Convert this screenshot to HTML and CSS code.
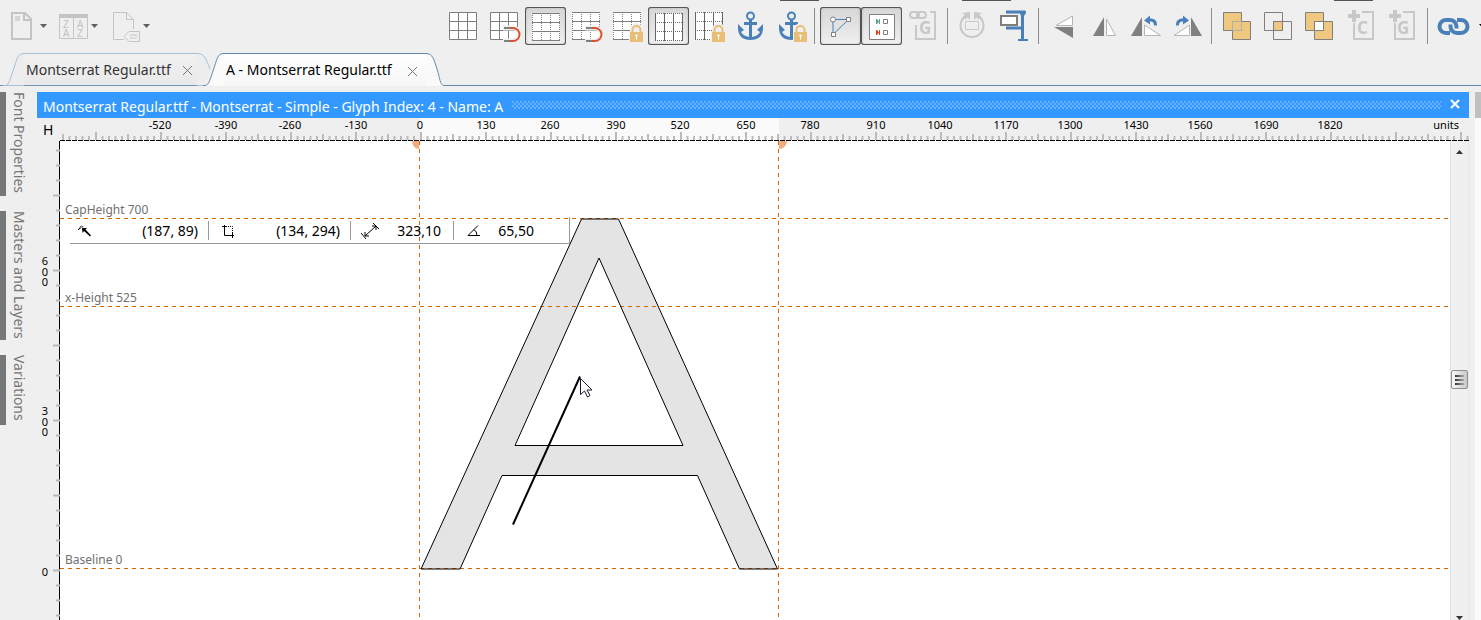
FILE: index.html
```html
<!DOCTYPE html>
<html lang="en">
<head>
<meta charset="utf-8">
<title>A - Montserrat Regular.ttf</title>
<link rel="stylesheet" href="styles.css">
</head>
<body>
<svg class="defs" aria-hidden="true">
  <defs>
    <g id="grid-solid"><path d="M6.5 5.5h27v27h-27z" fill="#fff" stroke="#7f7f7f"/><path d="M15.5 5.5v27M24.5 5.5v27M6.5 14.5h27M6.5 23.5h27" stroke="#7f7f7f"/></g>
    <g id="grid-rows"><path d="M6 5h28v28h-28z" fill="#fff"/><path d="M6 5.5h28M6 14.5h28M6 23.5h28M6 32.5h28" stroke="#7f7f7f"/><path d="M6.5 5v28M15.5 5v28M24.5 5v28M33.5 5v28" stroke="#7f7f7f" stroke-dasharray="1 1"/></g>
    <g id="grid-cols"><path d="M6 5h28v28h-28z" fill="#fff"/><path d="M6.5 5v28M15.5 5v28M24.5 5v28M33.5 5v28" stroke="#666"/><path d="M6 5.5h28M6 14.5h28M6 23.5h28M6 32.5h28" stroke="#666" stroke-dasharray="1 1"/></g>
    <g id="magnet" fill="none"><path d="M19 21h10a6.500 6.500 0 0 1 0 13h-10" stroke="#efefef" stroke-width="5"/><path d="M25 21h4a6.500 6.500 0 0 1 0 13h-4" stroke="#d9532f" stroke-width="2"/><path d="M20 21h6M20 34h6" stroke="#7f7f7f" stroke-width="2"/></g>
    <g id="lock"><path d="M25.500 25v-2.500a4 4 0 0 1 8 0V25" fill="#efefef" stroke="#efefef" stroke-width="5"/><path d="M22 24h15v12h-15z" fill="#efefef"/><path d="M25.500 26v-3a4 4 0 0 1 8 0v3" fill="none" stroke="#e9bf78" stroke-width="2"/><path d="M23 25h13v10h-13z" fill="#e9bf78"/><path d="M28 28.500q1.500-2 3 0l-1 1v3h-1v-3z" fill="#fff"/></g>
    <g id="anchor"><circle cx="20.500" cy="9" r="3.500" fill="none" stroke="#4a80b8" stroke-width="2"/><path d="M19 12h3v3h5v3h-5v12q6-1 8-5l-3-2 6-6v5q-1 11-12.500 11T8 22v-5l6 6-3 2q2 4 8 5V18h-5v-3h5z" fill="#4a80b8"/></g>
    <g id="add-frame" stroke="#c8c8c8" fill="none" stroke-width="2"><path d="M23 5h11v27H15V16"/><path d="M15 3v12M9 9h12" stroke-width="4"/></g>
    <pattern id="ticks-x" width="65" height="8" x="360" y="14" patternUnits="userSpaceOnUse">
      <path d="M1 0v8M33 2v6M7.500 4v4M14 4v4M20.500 4v4M27 4v4M39.500 4v4M46 4v4M52.500 4v4M59 4v4" stroke="#bbb" stroke-width="2"/>
    </pattern>
    <pattern id="ticks-y" width="7" height="75" y="53" patternUnits="userSpaceOnUse">
      <path d="M0 1.500h7M3 16.500h4M3 31.500h4M3 46.500h4M3 61.500h4" stroke="#bbb" stroke-width="2"/>
    </pattern>
  </defs>
</svg>

<div class="upper-row" aria-hidden="true"><i class="edge edge-a"></i><i class="edge edge-b"></i><i class="edge edge-c"></i></div>
<header class="toolbar">
  <div class="group files">
    <button class="tool menu" aria-label="New font"><svg width="27" height="38"><path d="M1 6h13l6 6v20H1z" fill="none" stroke="#c4c4c4" stroke-width="2"/><path d="M13 6v7h7" fill="none" stroke="#c4c4c4" stroke-width="2"/><path d="M4 9h5v5H4z" fill="#d4d4d4"/></svg><span class="caret"></span></button>
    <button class="tool menu" aria-label="Sort glyphs"><svg width="30" height="38"><path d="M.500 9.500h28v22h-28zM14.500 9v23" fill="none" stroke="#c4c4c4"/><path d="M0 7h29v4H0z" fill="#c4c4c4"/><g class="sort-letters"><text x="4" y="21">Z</text><text x="18" y="21">A</text><text x="4" y="30">A</text><text x="18" y="30">Z</text></g></svg><span class="caret"></span></button>
    <button class="tool menu" aria-label="Tag font"><svg width="31" height="38"><path transform="translate(3 0)" d="M11 32.500H.500v-27h13l7 7V22M13.500 5.500v7h7M11 29.500l5-5h10.500v10H16zM17 28h7M17 31h7" fill="none" stroke="#c4c4c4"/></svg><span class="caret"></span></button>
  </div>
  <div class="group tools">
    <button class="tool" aria-label="Grid"><svg width="41" height="38"><use href="#grid-solid"/></svg></button>
    <button class="tool" aria-label="Snap to grid"><svg width="41" height="38"><use href="#grid-solid"/><use href="#magnet"/></svg></button>
    <button class="tool pressed" aria-label="Guidelines" aria-pressed="true"><svg width="41" height="38"><use href="#grid-rows" x="1" y="1"/></svg></button>
    <button class="tool" aria-label="Snap to guidelines"><svg width="41" height="38"><use href="#grid-rows"/><use href="#magnet"/></svg></button>
    <button class="tool" aria-label="Lock guidelines"><svg width="41" height="38"><use href="#grid-rows"/><use href="#lock"/></svg></button>
    <button class="tool pressed" aria-label="Metrics" aria-pressed="true"><svg width="41" height="38"><use href="#grid-cols" x="1" y="1"/></svg></button>
    <button class="tool" aria-label="Lock metrics"><svg width="41" height="38"><use href="#grid-cols"/><use href="#lock"/></svg></button>
    <button class="tool" aria-label="Anchors"><svg width="41" height="38"><use href="#anchor"/></svg></button>
    <button class="tool" aria-label="Lock anchors"><svg width="41" height="38"><use href="#anchor"/><use href="#lock"/></svg></button>
    <span class="sep narrow"></span>
    <button class="tool pressed" aria-label="Points" aria-pressed="true"><svg width="41" height="38" fill="none"><path d="M13 12.500h15.500L13 27.500z" fill="#e2e2e2" stroke="#4a80b8" stroke-width="1"/><g fill="#fff" stroke="#7f7f7f" stroke-width="1"><circle cx="13" cy="12.500" r="2.500"/><path d="M26.500 10.500h4v4h-4zM11.500 25.500h4v4h-4z"/></g></svg></button>
    <button class="tool pressed" aria-label="Point data" aria-pressed="true"><svg width="41" height="38" fill="none"><path d="M8.500 7.500h25v25h-25z" fill="#fff" stroke="#7f7f7f"/><path d="M15.500 12v5M18.500 12v5" stroke="#5fa08c"/><path d="M16 12l2 2.500-2 2.500z" fill="#5fa08c"/><path d="M15.500 23v5M18.500 23v5" stroke="#d9431f"/><path d="M16 23l2 2.500-2 2.500z" fill="#d9431f"/><path d="M22.500 12.500h4v4h-4zM22.500 23.500h4v4h-4z" stroke="#7f7f7f"/></svg></button>
    <button class="tool" aria-label="Composite link"><svg width="41" height="38" fill="none" stroke="#c8c8c8" stroke-width="2"><path d="M28 5h5v27H14V18"/><rect x="8" y="5" width="9" height="6" rx="3"/><rect x="15" y="5" width="9" height="6" rx="3"/><text class="letter" x="17" y="27">G</text></svg></button>
    <span class="sep"></span>
    <button class="tool" aria-label="Rotate"><svg width="41" height="38" fill="none" stroke="#c8c8c8"><path d="M25.500 8.500a11.500 11.500 0 1 1-11 0" stroke-width="2"/><path d="M13.500 14.500h13v8h-13z"/><path d="M10 6l8-1v8l-2.500-2.500-2 2-2.500-2.500 2-2zM30 6l-8-1v8l2.500-2.500 2 2 2.500-2.500-2-2z" fill="#c8c8c8" stroke="none"/></svg></button>
    <button class="tool" aria-label="Measure"><svg width="41" height="38" fill="none"><path d="M13 5h19M13 21h15" stroke="#4a80b8" stroke-width="3"/><path d="M26 4h7v2l-2 3v23h4v2H25v-2h3V9z" fill="#4a80b8"/><path d="M8 9h16v9H8z" fill="#fff" stroke="#7f7f78" stroke-width="2"/></svg></button>
    <span class="sep"></span>
    <button class="tool" aria-label="Flip vertical"><svg width="41" height="38"><path d="M13 18.500L29.500 9v9.500z" fill="#fff" stroke="#b5b5b5"/><path d="M11 20h19v11z" fill="#808080"/></svg></button>
    <button class="tool" aria-label="Flip horizontal"><svg width="41" height="38"><path d="M9 29L20 10v19z" fill="#808080"/><path d="M22.500 12l9 16.500h-9z" fill="#fff" stroke="#b5b5b5"/></svg></button>
    <button class="tool" aria-label="Rotate left"><svg width="41" height="38"><path d="M6 29L17 10v19z" fill="#808080"/><path d="M19.500 18l16 10.500h-16z" fill="#fff" stroke="#b5b5b5"/><path d="M19 13.500l6-5v3c5 0 7 2 7 7h-3c0-3-1-4-4-4v3z" fill="#4a80b8"/></svg></button>
    <button class="tool" aria-label="Rotate right"><svg width="41" height="38"><path d="M25 10l11 19H25z" fill="#808080"/><path d="M23.500 18v10.500H8z" fill="#fff" stroke="#b5b5b5"/><path d="M23 13.500l-6-5v3c-5 0-7 2-7 7h3c0-3 1-4 4-4v3z" fill="#4a80b8"/></svg></button>
    <span class="sep"></span>
    <button class="tool" aria-label="Union"><svg width="41" height="38" stroke="#7f7f7f" fill="#eec87f"><path d="M7.500 5.500h18v18h-18zM16.500 14.500h18v18h-18z"/><path d="M16.500 14.500h9v9h-9z" stroke="#b5b0a4"/></svg></button>
    <button class="tool" aria-label="Intersection"><svg width="41" height="38" stroke="#7f7f7f" fill="none"><path d="M16.500 14.500h9v9h-9z" fill="#eec87f"/><path d="M7.500 5.500h18v18h-18zM16.500 14.500h18v18h-18z"/></svg></button>
    <button class="tool" aria-label="Exclusion"><svg width="41" height="38" stroke="#7f7f7f" fill="#eec87f"><path d="M7.500 5.500h18v18h-18zM16.500 14.500h18v18h-18z"/><path d="M16.500 14.500h9v9h-9z" fill="#fff"/></svg></button>
    <button class="tool" aria-label="Add contour"><svg width="41" height="38"><use href="#add-frame"/><text class="letter" x="18" y="27">C</text></svg></button>
    <button class="tool" aria-label="Add glyph"><svg width="41" height="38"><use href="#add-frame"/><text class="letter" x="17" y="27">G</text></svg></button>
    <span class="sep wide"></span>
    <button class="tool" aria-label="Link"><svg width="41" height="38" fill="none" stroke="#4a80b8" stroke-width="4"><path d="M16 26h-4a6.500 6.500 0 0 1 0-13h4a6.500 6.500 0 0 1 6.500 6.500v2"/><path d="M23 13h4a6.500 6.500 0 0 1 0 13h-4a6.500 6.500 0 0 1-6.500-6.500v-2"/></svg></button>
    <span class="caret dark"></span>
  </div>
</header>

<nav class="tabs">
  <div class="tab first">
    <svg class="tab-side" width="21" height="33"><path d="M0 32.500C6 33 6 28 10 18S14 .500 21 .500V32.500z" class="fill-off"/><path d="M0 32.500C6 33 6 29 10 18S14 .500 21 .500" class="line-off"/></svg>
    <div class="tab-body"><a href="#font">Montserrat Regular.ttf</a><button class="close" aria-label="Close font"><svg width="9" height="9"><path d="M0 0l9 9M9 0L0 9"/></svg></button></div>
    <svg class="tab-side" width="16" height="33"><path d="M0 .500C9 0 11 11 13 16L6 32.500H0z" class="fill-off"/><path d="M0 .500C8 .500 9 6 13 16" class="line-off"/></svg>
  </div>
  <div class="tab active">
    <svg class="tab-side" width="21" height="33"><path d="M0 32.500C6 33 6 29 10 18S14 .500 21 .500V33H0z" class="fill-on"/><path d="M0 32.500C6 33 6 29 10 18S14 .500 21 .500" class="line-on"/></svg>
    <div class="tab-body"><a href="#glyph">A - Montserrat Regular.ttf</a><button class="close" aria-label="Close glyph"><svg width="9" height="9"><path d="M0 0l9 9M9 0L0 9"/></svg></button></div>
    <svg class="tab-side" width="18" height="33"><path d="M0 .500C8 .500 8 6 12 18S16 32 18 32.500V33H0z" class="fill-on"/><path d="M0 .500C7 .500 8 7 11 16S14 32.500 18 32.500" class="line-on"/></svg>
  </div>
  <div class="tab-rest"></div>
</nav>

<main class="workspace">
  <aside class="rail">
    <button class="rail-tab font">Font Properties</button>
    <button class="rail-tab masters">Masters and Layers</button>
    <button class="rail-tab variations">Variations</button>
  </aside>
  <section class="panel">
    <div class="title"><h1>Montserrat Regular.ttf - Montserrat - Simple - Glyph Index: 4 - Name: A</h1><span class="grip"></span><button class="title-close" aria-label="Close"><svg width="10" height="10"><path d="M1 1l8 8M9 1L1 9" stroke="#fff" stroke-width="2"/></svg></button></div>
    <div class="corner">H</div>
    <svg class="ruler-x" width="100%" height="23">
      <rect x="360" width="359" height="22" fill="#fafafa"/>
      <rect y="14" width="100%" height="8" fill="url(#ticks-x)"/>
      <path d="M0 22.500H4000" stroke="#000" stroke-dasharray="5 1"/>
      <g class="ruler-text">
        <text x="100" y="11">-520</text><text x="166" y="11">-390</text><text x="230" y="11">-260</text><text x="296" y="11">-130</text><text x="360" y="11">0</text><text x="426" y="11">130</text><text x="490" y="11">260</text><text x="556" y="11">390</text><text x="620" y="11">520</text><text x="686" y="11">650</text><text x="750" y="11">780</text><text x="816" y="11">910</text><text x="880" y="11">1040</text><text x="946" y="11">1170</text><text x="1010" y="11">1300</text><text x="1076" y="11">1430</text><text x="1140" y="11">1560</text><text x="1206" y="11">1690</text><text x="1270" y="11">1820</text>
      </g>
      <svg x="100%" overflow="visible"><text class="units" x="-10" y="11">units</text></svg>
    </svg>
    <svg class="ruler-y" width="23" height="100%">
      <path d="M22.500 0V4000" stroke="#000"/>
      <g transform="translate(16 0)"><rect width="7" height="4000" fill="url(#ticks-y)"/></g>
      <g class="ruler-text"><text x="8" y="124">6</text><text x="8" y="135">0</text><text x="8" y="145">0</text><text x="8" y="274">3</text><text x="8" y="285">0</text><text x="8" y="295">0</text><text x="8" y="435">0</text></g>
    </svg>
    <div class="canvas">
      <svg class="drawing" width="100%" height="100%">
        <defs><path id="glyph-a" d="M521.500 78h37l159 350h-38l-42-93.500H442l-42 93.500h-39zM539 117l-84 187.500h168z"/></defs>
        <use href="#glyph-a" fill="#e4e4e4" fill-rule="evenodd"/>
        <g stroke="#d96400" stroke-dasharray="4 4"><path d="M0 77.500H4000"/><path d="M0 165.500H4000"/><path d="M0 427.500H4000"/><path d="M359.500 0V4000"/><path d="M718.500 0V4000"/></g>
        <use href="#glyph-a" fill="none" stroke="#000"/>
        <path d="M359 0v8a7 8 0 0 1-7-8zM719 0v8a8 8 0 0 0 8-8z" fill="#f0ad80"/>
        <g class="metric-text"><text x="5" y="73">CapHeight 700</text><text x="5" y="161">x-Height 525</text><text x="5" y="423">Baseline 0</text></g>
        <path d="M453 383.500L520 235.500" stroke="#000" stroke-width="2"/>
        <path d="M520.500 237.500v16l4-3.500 3 6 2.500-1.500-3-5.500h5z" fill="#fff" stroke="#1a1a33"/>
      </svg>
      <div class="measure">
        <div class="cell position"><svg width="14" height="14"><path d="M4 4h5L7.500 5.500l5.500 6-1 1L6 7 4.500 9z"/><path d="M0 6l4-5M1 5l5-3" stroke="#000" stroke-dasharray="2 1"/></svg><output>(187, 89)</output></div>
        <div class="cell size"><svg width="14" height="14"><path d="M2.500 1v10.500H12M0 2.500h4M10.500 9v5" fill="none" stroke="#000"/><path d="M4 2.500h6.500V11" fill="none" stroke="#000" stroke-dasharray="1 1"/></svg><output>(134, 294)</output></div>
        <div class="cell length"><svg width="18" height="18"><path d="M0 11l5 6M12 1l6 6M4 14L15 4M4 10v4h4M11 4h4v4" fill="none" stroke="#000"/></svg><output>323,10</output></div>
        <div class="cell angle"><svg width="14" height="12"><path d="M11 .500L1 10.500h12M7 4.500q3 2 3 6" fill="none" stroke="#000"/></svg><output>65,50</output></div>
      </div>
    </div>
    <div class="scroll">
      <button class="arrow up" aria-label="Scroll up"></button>
      <button class="thumb" aria-label="Scroll position"><i></i><i></i><i></i></button>
      <button class="arrow down" aria-label="Scroll down"></button>
    </div>
  </section>
  <div class="outer-scroll"></div>
</main>
</body>
</html>
```

FILE: styles.css
```css
* { box-sizing: border-box; }
body {
  margin: 0;
  height: 100vh;
  display: flex;
  flex-direction: column;
  overflow: hidden;
  background: #efefef;
  color: #000;
  font: 14px/20px "Noto Sans", "Open Sans", sans-serif;
}
button { margin: 0; padding: 0; border: 0; background: none; font: inherit; color: inherit; }
svg { display: block; }
.defs { position: absolute; width: 0; height: 0; }

.upper-row { flex: none; display: flex; height: 7px; overflow: hidden; }
.edge { flex: none; height: 1px; background: #555; }
.edge-a { width: 39px; margin-left: 780px; }
.edge-b { width: 49px; margin-left: 143px; }
.edge-c { width: 39px; margin-left: 323px; }

.toolbar { flex: none; display: flex; height: 46px; overflow: hidden; }
.group { flex: none; display: flex; align-items: flex-start; }
.files { width: 443px; padding-left: 11px; gap: 12px; }
.tool { flex: none; display: flex; height: 38px; border-radius: 3px; }
.menu { align-items: center; gap: 2px; }
.tool.pressed { background: linear-gradient(#d6d6d6, #f0f0f0); box-shadow: inset 0 0 0 1px #555, inset 0 0 3px #888; }
.caret { width: 7px; height: 4px; background: #606060; clip-path: polygon(0 0, 100% 0, 50% 100%); }
.caret.dark { align-self: flex-start; margin: 17px 0 0 4px; background: #000; }
.sep { width: 1px; height: 36px; margin: 1px 4px 0; background: #8c8c8c; }
.sep.narrow { margin: 1px 5px 0 2px; }
.sep.wide { margin: 1px 6px 0; }
.letter { font: bold 17px "Open Sans", sans-serif; fill: #c8c8c8; stroke: none; }
.sort-letters { font: 10px "Open Sans", sans-serif; fill: #c0c0c0; }

.tabs { flex: none; display: flex; height: 33px; }
.tab { flex: none; display: flex; position: relative; }
.tab.first { margin-right: -10px; padding-left: 3px; border-bottom: 1px solid #7394b5; height: 33px; }
.tab.active { z-index: 1; }
.tab-body { display: flex; align-items: center; border-top: 1px solid #a7c0d9; background: linear-gradient(#f1f1f1, #e9e9e9); }
.tab-body a { color: #333; text-decoration: none; }
.first .tab-body { width: 173px; padding-left: 2px; }
.active .tab-body { width: 202px; padding-left: 2px; border-color: #6688aa; background: linear-gradient(#fff, #f6f6f6); }
.active .tab-body a { color: #000; }
.close { margin: 2px 5px 0 auto; stroke: #777; }
.active .close { margin-right: 9px; }
.fill-off { fill: #ededed; }
.fill-on { fill: #fafafa; }
.line-off { fill: none; stroke: #a7c0d9; }
.line-on { fill: none; stroke: #6688aa; }
.tab-rest { flex: 1; border-bottom: 1px solid #6688aa; }
.tab.first { margin-right: -10px; }

.workspace { flex: 1; min-height: 0; display: flex; padding-top: 6px; }
.rail { flex: none; width: 37px; display: flex; flex-direction: column; align-items: flex-start; gap: 15px; }
.rail-tab { flex: none; width: 32px; border-left: 6px solid #777; color: #777; writing-mode: vertical-rl; text-align: left; line-height: 26px; white-space: nowrap; }
.rail-tab.font { height: 104px; }
.rail-tab.masters { height: 129px; }
.rail-tab.variations { height: 70px; }

.panel { flex: 1; min-width: 0; display: grid; grid-template: 26px 23px minmax(0, 1fr) / 23px minmax(0, 1fr) 19px; }
.title { grid-column: 1 / -1; display: flex; align-items: center; padding-left: 6px; background: #3399ff; color: #fff; overflow: hidden; }
.title h1 { margin: 4px 0 0; font-size: 14px; font-weight: 400; white-space: nowrap; }
.grip {
  flex: 1;
  height: 8px;
  margin: 0 9px;
  background-image: radial-gradient(circle at 1px 1px, #66b2ff 1px, transparent 1px), radial-gradient(circle at 3px 3px, #66b2ff 1px, transparent 1px);
  background-size: 4px 4px;
}
.title-close { margin: 0 9px 2px 0; }
.corner { padding-left: 6px; line-height: 24px; }
.ruler-x { grid-column: 2 / -1; }
.ruler-text { font-size: 11px; text-anchor: middle; }
.units { font-size: 11px; text-anchor: end; }
.canvas { position: relative; overflow: hidden; background: #fff; }
.metric-text { font-size: 12px; fill: #707070; }
.measure { position: absolute; left: 10px; top: 76px; display: flex; height: 27px; padding: 4px 0 3px; border-right: 1px solid #999; border-bottom: 1px solid #999; }
.cell { display: flex; align-items: center; justify-content: space-between; }
.cell + .cell { border-left: 1px solid #999; }
.position { width: 138px; padding: 0 10px 0 8px; }
.size { width: 142px; padding: 0 10px 0 13px; }
.length { width: 103px; padding: 0 12px 0 10px; }
.angle { width: 116px; padding: 0 35px 0 13px; }

.scroll { display: flex; flex-direction: column; align-items: center; border-left: 1px solid #e0e0e0; border-right: 1px solid #e8e8e8; background: #f0f0f0; overflow: hidden; }
.arrow { flex: none; width: 7px; height: 4px; background: #333; }
.up { margin-top: 9px; clip-path: polygon(50% 0, 100% 100%, 0 100%); }
.down { margin-top: auto; clip-path: polygon(0 0, 100% 0, 50% 100%); }
.thumb { flex: none; display: flex; flex-direction: column; align-items: center; justify-content: center; gap: 2px; width: 17px; height: 19px; margin-top: 216px; border: 1px solid #8f8f8f; border-radius: 2px; background: linear-gradient(90deg, #f7f7f7, #c8c8cc); }
.thumb i { width: 9px; height: 2px; background: linear-gradient(90deg, #333, #aaa); }
.outer-scroll { flex: none; width: 6px; margin-left: 6px; border-top: 26px solid #c0c0c0; background: #fafafa; }
```
